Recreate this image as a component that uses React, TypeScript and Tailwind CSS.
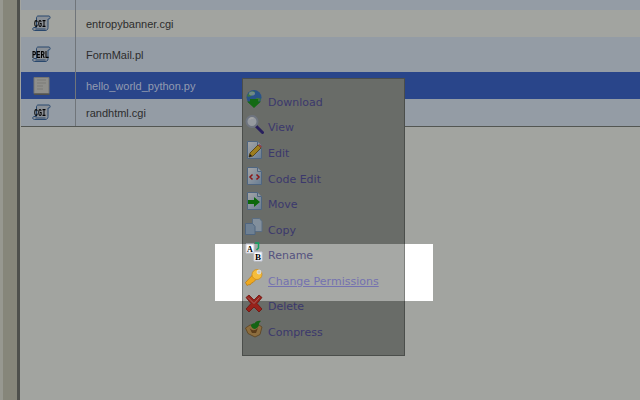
import React from 'react';

const dim = 'brightness-[.65]';

function ScrollIcon({ label, wide = false }: { label?: string; wide?: boolean }) {
  return (
    <svg width="24" height="18" viewBox="0 0 24 18" className="block">
      <path d="M6 1h11c1.500 0 1.500 3 0 3h-1V12.500c0 2-1 3-3 3H2.500C0.500 15.500 0 13 2 12.500h2.500V3C4.500 2 5 1 6 1z" fill="#d5dde8" stroke="#3f6ea8" strokeWidth="1" />
      <path d="M3.500 14h10" stroke="#3f6ea8" strokeWidth="1" />
      {label && (
        <text x={wide ? 8.500 : 8} y="11.500" textAnchor="middle" fontSize={wide ? 10 : 11} fontWeight="700" fontFamily="'Liberation Mono', monospace" textLength={wide ? 17 : 12} lengthAdjust="spacingAndGlyphs" fill="#000">{label}</text>
      )}
    </svg>
  );
}

function PyIcon() {
  return (
    <svg width="18" height="19" viewBox="0 0 18 19" className="block">
      <path d="M1 0.500h15v16H1z" fill="#dcdcd6" stroke="#b5b5af" />
      <path d="M4 3h9M4 6h9M4 9h6M4 12h6" stroke="#bdbdb7" strokeWidth="1" />
      <path d="M1 16.500h15l1 1.500H1z" fill="#7d7d78" />
    </svg>
  );
}

function FileRow({ name, tall, tone, icon }: { name: string; tall?: boolean; tone: string; icon: React.ReactNode }) {
  return (
    <div className={`flex ${tall ? 'h-[35px]' : 'h-[27px]'} ${tone}`}>
      <div className={`w-[54px] shrink-0 flex items-center pl-[11px] pt-px ${dim}`}>{icon}</div>
      <div className="w-px bg-[#70757a]" />
      <div className="pl-[10px] pt-px flex items-center">{name}</div>
    </div>
  );
}

function PageIcon({ children }: { children?: React.ReactNode }) {
  return (
    <svg width="20" height="20" viewBox="0 0 20 20" className="block">
      <defs>
        <linearGradient id="pg" x1="0" y1="0" x2="1" y2="1">
          <stop offset="0" stopColor="#ffffff" />
          <stop offset="1" stopColor="#9fc0e4" />
        </linearGradient>
      </defs>
      <path d="M2.500 1.500h10l4 4v13h-14z" fill="url(#pg)" stroke="#7a9cc4" />
      <path d="M12.500 1.500v4h4" fill="#dbe8f5" stroke="#7a9cc4" />
      {children}
    </svg>
  );
}

function DownloadIcon() {
  return (
    <svg width="20" height="20" viewBox="0 0 20 20" className="block">
      <circle cx="9" cy="8.500" r="7.500" fill="#3f7fd0" />
      <path d="M4 4c2-2 5-2 6-1 0 2-2 2-3 3-1 2-4 2-5 1zM11 9c2 0 4 0 5 1-1 2-3 3-4 2z" fill="#5fb85a" />
      <ellipse cx="7" cy="4.500" rx="3" ry="2" fill="#cfe3f8" opacity=".7" />
      <path d="M5 10h8v2.500h3l-7 6.500-7-6.500h3z" fill="#1fa31f" />
    </svg>
  );
}

function ViewIcon() {
  return (
    <svg width="20" height="20" viewBox="0 0 20 20" className="block">
      <path d="M11 11l6.500 6.500" stroke="#3d2f8f" strokeWidth="3" strokeLinecap="round" />
      <circle cx="7" cy="6.500" r="5.500" fill="#e6edf6" stroke="#a9b3c4" strokeWidth="2" />
      <path d="M4.500 4.500c1-1.500 3-1.500 4-1" stroke="#fff" strokeWidth="1.500" fill="none" />
    </svg>
  );
}

function EditIcon() {
  return (
    <PageIcon>
      <path d="M4 17l1-4 8-8 3 3-8 8z" fill="#f2c230" stroke="#7a5a10" strokeWidth=".8" />
      <path d="M13 5l3 3 1-1.500-2.500-2.500z" fill="#e06a6a" />
      <path d="M4 17l1-3 2 2z" fill="#222" />
    </PageIcon>
  );
}

function CodeIcon() {
  return (
    <PageIcon>
      <path d="M7.500 8.500l-2.500 2.500 2.500 2.500M11.500 8.500l2.500 2.500-2.500 2.500" stroke="#d42020" strokeWidth="1.500" fill="none" />
    </PageIcon>
  );
}

function MoveIcon() {
  return (
    <PageIcon>
      <path d="M3 9h6V6l6 5-6 5v-3H3z" fill="#12a012" />
    </PageIcon>
  );
}

function CopyIcon() {
  return (
    <svg width="20" height="20" viewBox="0 0 20 20" className="block">
      <path d="M7.500 1.500h7l2.500 3v10h-9.500z" fill="#c8dcf0" stroke="#8aa8c8" />
      <path d="M0.500 6.500h7l2.500 3v8h-9.500z" fill="#a9c5e2" stroke="#7a9cc4" />
    </svg>
  );
}

function RenameIcon() {
  return (
    <svg width="20" height="20" viewBox="0 0 20 20" className="block">
      <path d="M1 2h8v9H1z" fill="#fff" stroke="#c4c8d8" />
      <path d="M9 10h8v9H9z" fill="#fff" stroke="#c4c8d8" />
      <text x="5" y="9.500" textAnchor="middle" fontSize="8" fontWeight="700" fontFamily="'Liberation Serif', serif" fill="#000">A</text>
      <text x="13" y="17.500" textAnchor="middle" fontSize="9" fontWeight="700" fontFamily="'Liberation Serif', serif" fill="#000">B</text>
      <path d="M10 1h3.500v5l-2 2" stroke="#12a060" strokeWidth="1.500" fill="none" />
    </svg>
  );
}

function KeyIcon() {
  return (
    <svg width="20" height="20" viewBox="0 0 20 20" className="block">
      <path d="M8 6.500L0.500 14.500l1.500 3L4 16.500l1 .5 1.500-2 1.500-.5 4-4z" fill="#f0a91e" stroke="#b87810" strokeWidth=".7" />
      <circle cx="12" cy="6.500" r="5" fill="#f5bd3c" stroke="#c88818" strokeWidth=".7" />
      <circle cx="14" cy="4" r="2" fill="#c8c8c0" stroke="#eee" strokeWidth=".7" />
    </svg>
  );
}

function DeleteIcon() {
  return (
    <svg width="20" height="20" viewBox="0 0 20 20" className="block">
      <path d="M1 3.500L4 1l5 5 5-5 3 2.500L12 9.500l5 5.500-3 3-5-5-5 5-3-3 5-5.500z" fill="#e8342a" stroke="#a81c14" strokeWidth=".8" />
      <path d="M3 3.500l6 6 5.500-6" stroke="#ff9a90" strokeWidth="1" fill="none" />
    </svg>
  );
}

function CompressIcon() {
  return (
    <svg width="20" height="20" viewBox="0 0 20 20" className="block">
      <path d="M0.500 9l4.500-3h9l3 2-2 7.500-5 2.500-7-3.500z" fill="#d8a860" stroke="#8a6430" strokeWidth=".8" />
      <path d="M4 8c2 4 6 4 9 1l-2 5H7z" fill="#8a5c28" />
      <path d="M6 7c0-3 3-2 4-3 0-1 3-3 6-2-1 1-2 2-2 3 0 3-2 4-4 5-2 0-3-1-4-3z" fill="#1e9a1e" />
    </svg>
  );
}

const items: { label: string; icon: React.ReactNode; state?: 'lit' | 'link' }[] = [
  { label: 'Download', icon: <DownloadIcon /> },
  { label: 'View', icon: <ViewIcon /> },
  { label: 'Edit', icon: <EditIcon /> },
  { label: 'Code Edit', icon: <CodeIcon /> },
  { label: 'Move', icon: <MoveIcon /> },
  { label: 'Copy', icon: <CopyIcon /> },
  { label: 'Rename', icon: <RenameIcon />, state: 'lit' },
  { label: 'Change Permissions', icon: <KeyIcon />, state: 'link' },
  { label: 'Delete', icon: <DeleteIcon /> },
  { label: 'Compress', icon: <CompressIcon /> },
];

export default function App() {
  return (
    <div className="relative w-[640px] h-[400px] overflow-hidden flex bg-[#a2a4a0] font-['Liberation_Sans',sans-serif] text-[11px] text-[#2d2d2d]">
      <div className="w-[3px] shrink-0 bg-[#979890]" />
      <div className="w-[14px] shrink-0 bg-[#86867a]" />
      <div className="w-[3px] shrink-0 bg-[#4e504c]" />
      <div className="w-px shrink-0 bg-[#a2a4a0]" />

      <div className="flex-1 min-w-0">
        <div className="h-[10px] bg-[#949ca5] flex overflow-hidden">
          <div className="w-[54px] shrink-0 h-[2px] overflow-hidden pl-[11px]">
            <div className={`-mt-[16px] ${dim}`}><ScrollIcon /></div>
          </div>
          <div className="w-px bg-[#70757a]" />
        </div>
        <FileRow name="entropybanner.cgi" tone="bg-[#a2a4a0]" icon={<ScrollIcon label="CGI" />} />
        <FileRow name="FormMail.pl" tall tone="bg-[#949ca5]" icon={<ScrollIcon label="PERL" wide />} />
        <div className="flex h-[27px] bg-[#29458a] text-[#939bb0]">
          <div className={`w-[54px] shrink-0 flex items-center pl-[12px] pt-px ${dim}`}><PyIcon /></div>
          <div className="w-px bg-[#70757a]" />
          <div className="pl-[10px] pt-px flex items-center">hello_world_python.py</div>
        </div>
        <FileRow name="randhtml.cgi" tone="bg-[#949ca5]" icon={<ScrollIcon label="CGI" />} />
        <div className="h-px bg-[#535652]" />
      </div>

      {/* highlight behind the two lit menu rows */}
      <div className="absolute left-[215px] top-[244px] w-[218px] h-[57px] bg-white" />

      <div className="absolute left-[242px] top-[78px] w-[163px] h-[278px] border border-[#4b4e4b] bg-[#696c68] pt-[11.400px] font-['DejaVu_Sans',sans-serif] text-[11px]">
        <div className="absolute -left-px -right-px top-[165px] h-[57px] bg-[#a6a8a5] border-x border-[#7d7f7c]" />
        {items.map((item) => (
          <div key={item.label} className="relative flex items-center h-[25.560px] pl-[2px]">
            <div className={`w-[23px] shrink-0 -mt-[8px] ${item.state ? '' : dim}`}>{item.icon}</div>
            {item.state === 'link' ? (
              <span className="text-[#7472b0] underline">{item.label}</span>
            ) : (
              <span className={item.state === 'lit' ? 'text-[#55527f]' : 'text-[#3b386c]'}>{item.label}</span>
            )}
          </div>
        ))}
      </div>
    </div>
  );
}
